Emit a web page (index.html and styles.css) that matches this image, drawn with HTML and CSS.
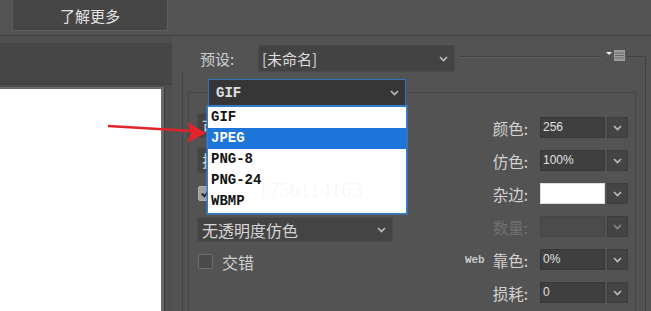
FILE: index.html
```html
<!DOCTYPE html>
<html lang="zh">
<head>
<meta charset="utf-8">
<title>存储为Web所用格式</title>
<link rel="stylesheet" href="styles.css">
</head>
<body>
<div class="topbar"><button class="learn">了解更多</button></div>
<div class="main">
  <div class="left">
    <div class="left-head"></div>
    <div class="canvas-wrap"><div class="canvas"></div></div>
  </div>
  <div class="right">
    <div class="preset-row">
      <span class="preset-lbl">预设:</span>
      <div class="preset-sel"><span>[未命名]</span><svg class="chev" viewBox="0 0 9 6"><polyline points="1,1 4.5,4.5 8,1"/></svg></div>
      <div class="rule"></div>
      <svg class="menu-icon" viewBox="0 0 20 11"><polygon points="0,2 6,2 3,5" class="tri"/><rect x="8" y="0" width="11" height="11" class="mbox"/><line x1="9" y1="3" x2="18" y2="3"/><line x1="9" y1="5.5" x2="18" y2="5.5"/><line x1="9" y1="8" x2="18" y2="8"/></svg>
      <div class="cap"></div>
    </div>
    <div class="outer">
      <fieldset class="group">
        <legend class="fmt-sel"><span>GIF</span><svg class="chev" viewBox="0 0 9 6"><polyline points="1,1 4.5,4.5 8,1"/></svg></legend>
        <div class="cols">
          <div class="lcol">
            <div class="lsel s1"><span>可选择</span><svg class="chev" viewBox="0 0 9 6"><polyline points="1,1 4.5,4.5 8,1"/></svg></div>
            <div class="lsel s2"><span>扩散</span><svg class="chev" viewBox="0 0 9 6"><polyline points="1,1 4.5,4.5 8,1"/></svg></div>
            <div class="chk c1"><span class="box checked"><svg viewBox="0 0 12 12"><polyline points="2.5,6 5,8.5 9.5,3"/></svg></span><span>透明度</span></div>
            <div class="lsel s3"><span>无透明度仿色</span><svg class="chev" viewBox="0 0 9 6"><polyline points="1,1 4.5,4.5 8,1"/></svg></div>
            <div class="chk c2"><span class="box"></span><span>交错</span></div>
          </div>
          <div class="rcol">
            <div class="row"><span class="lbl">颜色:</span><span class="inp">256</span><span class="btn"><svg class="chev" viewBox="0 0 9 6"><polyline points="1,1 4.5,4.5 8,1"/></svg></span></div>
            <div class="row"><span class="lbl">仿色:</span><span class="inp">100%</span><span class="btn"><svg class="chev" viewBox="0 0 9 6"><polyline points="1,1 4.5,4.5 8,1"/></svg></span></div>
            <div class="row"><span class="lbl">杂边:</span><span class="inp white"></span><span class="btn"><svg class="chev" viewBox="0 0 9 6"><polyline points="1,1 4.5,4.5 8,1"/></svg></span></div>
            <div class="row disabled"><span class="lbl">数量:</span><span class="inp"></span><span class="btn"><svg class="chev" viewBox="0 0 9 6"><polyline points="1,1 4.5,4.5 8,1"/></svg></span></div>
            <div class="row"><span class="lbl"><span class="web">Web</span>靠色:</span><span class="inp">0%</span><span class="btn"><svg class="chev" viewBox="0 0 9 6"><polyline points="1,1 4.5,4.5 8,1"/></svg></span></div>
            <div class="row"><span class="lbl">损耗:</span><span class="inp">0</span><span class="btn"><svg class="chev" viewBox="0 0 9 6"><polyline points="1,1 4.5,4.5 8,1"/></svg></span></div>
          </div>
        </div>
      </fieldset>
    </div>
  </div>
</div>
<ul class="popup">
  <li>GIF</li>
  <li class="on">JPEG</li>
  <li>PNG-8</li>
  <li>PNG-24</li>
  <li>WBMP</li>
  <span class="wm">1756114163</span>
</ul>
<svg class="arrow" viewBox="0 0 110 35"><line x1="8" y1="11" x2="92" y2="16"/><polygon points="87,7 106,18 87,28 91,18"/></svg>
</body>
</html>
```
FILE: styles.css
```css
* { box-sizing: border-box; }
html, body { margin: 0; padding: 0; }
body {
  width: 651px; height: 311px; overflow: hidden;
  background: #535353;
  font-family: "Noto Sans CJK SC", "Noto Sans", sans-serif;
  color: #d2d2d2;
  position: relative;
}
.topbar {
  height: 36px;
  background: #545454;
  border-bottom: 1px solid #3e3e3e;
  padding-left: 12px;
}
.learn {
  display: block;
  width: 156px; height: 31px;
  background: #464646;
  border: 1px solid #5d5d5d;
  border-top: 0;
  color: #e2e2e2;
  font-family: "Noto Sans CJK SC", sans-serif;
  font-size: 15px;
  padding: 0;
}
.main { display: flex; height: 275px; }
.left {
  width: 172px;
  display: flex; flex-direction: column;
  padding-top: 7px;
  background: #4f4f4f;
}
.left-head { height: 42px; background: #464646; border-bottom: 1px solid #404040; }
.canvas-wrap { flex: 1; padding-top: 2px; display: flex; }
.canvas {
  width: 164px;
  background: #fff;
  border-top: 2px solid #6a6a6a;
  border-right: 3px solid #6a6a6a;
  box-shadow: 1px 0 0 #3a3a3a;
}
.right { flex: 1; padding-right: 5px; display: flex; flex-direction: column; }
.preset-row {
  margin-top: 9px; height: 27px;
  display: flex; align-items: center;
  padding-left: 28px;
}
.preset-lbl { width: 58px; font-size: 15px; color: #cfcfcf; }
.preset-sel {
  width: 197px; height: 27px;
  background: #434343;
  border: 1px solid #4a4a4a;
  display: flex; align-items: center; justify-content: space-between;
  padding: 0 6px 0 3px;
  font-size: 15px; color: #dcdcdc;
}
.chev { width: 9px; height: 6px; flex: none; }
.chev polyline { fill: none; stroke: #bdbdbd; stroke-width: 1.6; }
.rule { flex: 1; margin-left: 5px; height: 1px; background: #424242; box-shadow: 0 1px 0 #5c5c5c; margin-top: -4px; }
.menu-icon { width: 20px; height: 11px; margin-left: 4px; margin-top: -6px; flex: none; }
.menu-icon .tri { fill: #f0f0f0; }
.menu-icon .mbox { fill: #9c9c9c; }
.menu-icon line { stroke: #6a6a6a; stroke-width: 1; }
.cap {
  width: 20px; align-self: stretch;
  margin-top: 11px;
  border-top: 1px solid #424242;
  border-right: 1px solid #424242;
}
.outer {
  flex: 1;
  margin-left: 10px;
  border-left: 1px solid #444;
  border-right: 1px solid #424242;
  padding: 7px 9px 0 5px;
}
.group {
  margin: 0; min-width: 0;
  border: 1px solid #464646;
  border-bottom: 0;
  padding: 0 0 0 8px;
  height: 240px;
}
.fmt-sel {
  margin-left: 11px;
  width: 198px; height: 27px;
  padding: 0 6px 0 7px;
  background: #363636;
  border: 1px solid #2f74bd;
  display: flex; align-items: center; justify-content: space-between;
  font-family: "Liberation Mono", monospace; font-weight: bold;
  font-size: 14px; color: #e0e0e0;
}
.cols { display: grid; grid-template-columns: 197px 1fr; }
.lcol { display: flex; flex-direction: column; margin-top: 7px; }
.lsel {
  width: 196px;
  background: #444;
  border: 1px solid #4b4b4b;
  display: flex; align-items: center; justify-content: space-between;
  padding: 0 6px 0 4px;
  font-size: 16px; color: #d4d4d4;
}
.s1 { height: 25px; }
.s2 { height: 26px; margin-top: 9px; }
.s3 { height: 25px; margin-top: 16px; }
.chk { display: flex; align-items: center; gap: 9px; font-size: 16px; color: #d0d0d0; padding-left: 1px; }
.c1 { height: 16px; margin-top: 12px; }
.c2 { height: 17px; margin-top: 11px; }
.box {
  width: 15px; height: 15px;
  border: 1px solid #6e6e6e; border-radius: 2px;
  background: #4a4a4a;
  display: inline-flex;
}
.box.checked { background: #a0a0a0; border-color: #b0b0b0; }
.box svg { width: 13px; height: 13px; }
.box svg polyline { fill: none; stroke: #2c2c2c; stroke-width: 1.8; }
.rcol { display: flex; flex-direction: column; gap: 12px; margin-top: 11px; padding-right: 7px; }
.row { display: flex; align-items: center; justify-content: flex-end; height: 21px; }
.lbl { font-size: 15.5px; color: #d2d2d2; margin-right: 12px; display: flex; align-items: center; }
.web { font-family: "Liberation Mono", monospace; font-size: 11px; font-weight: bold; margin-right: 8px; color: #c8c8c8; }
.inp {
  width: 65px; height: 21px;
  background: #3f3f3f;
  border: 1px solid #383838;
  font-family: "Liberation Sans", sans-serif;
  font-size: 12px; color: #e0e0e0;
  padding-left: 2px; line-height: 19px;
}
.inp.white { background: #fff; border-color: #ddd; }
.btn {
  width: 21px; height: 21px; margin-left: 2px;
  background: #444;
  border: 1px solid #3d3d3d;
  display: flex; align-items: center; justify-content: center;
}
.row.disabled .lbl { color: #707070; }
.row.disabled .inp { background: #4b4b4b; border-color: #464646; }
.row.disabled .chev polyline { stroke: #8a8a8a; }
.popup {
  position: absolute; left: 207px; top: 106px;
  width: 200px; height: 108px;
  margin: 0; padding: 0; list-style: none;
  background: #fff;
  border: 1px solid #2e7fd2;
  box-shadow: 0 0 0 1px rgba(60,130,210,0.55);
  font-family: "Liberation Mono", monospace; font-weight: bold;
  font-size: 14px; color: #141414;
  overflow: hidden;
}
.popup li { height: 21px; line-height: 21px; padding-left: 3px; position: relative; z-index: 1; }
.popup li.on { background: #1d74d9; color: #fff; }
.wm {
  position: absolute; left: 50px; top: 71px;
  font-family: "Liberation Serif", serif; font-weight: normal;
  font-size: 21px; color: rgba(0,0,0,0.05);
}
.arrow { position: absolute; left: 100px; top: 115px; width: 110px; height: 35px; }
.arrow line { stroke: #e2232a; stroke-width: 2.6; }
.arrow polygon { fill: #e2232a; }
```
